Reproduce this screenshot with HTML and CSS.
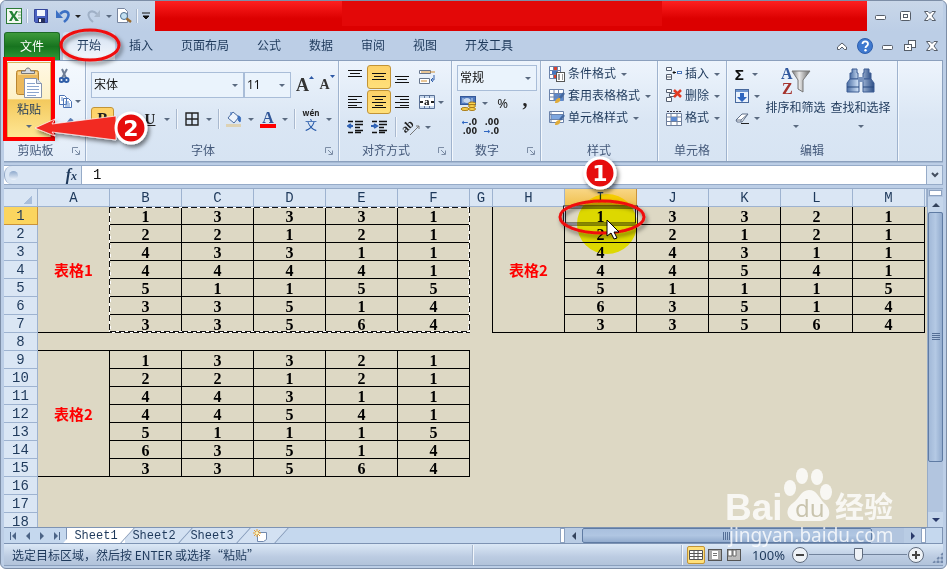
FILE: index.html
```html
<!DOCTYPE html>
<html lang="zh-CN">
<head>
<meta charset="utf-8">
<title>Sheet1</title>
<link rel="stylesheet" href="styles.css">
</head>
<body>
<svg class="defs" aria-hidden="true">
  <defs>
    <linearGradient id="steel" x1="0" y1="0" x2="1" y2="0"><stop offset="0" stop-color="#4a6da3"/><stop offset=".4" stop-color="#c9dcf3"/><stop offset="1" stop-color="#2e4f86"/></linearGradient>
    <linearGradient id="metal" x1="0" y1="0" x2="1" y2="0"><stop offset="0" stop-color="#777"/><stop offset=".4" stop-color="#e8e8e8"/><stop offset="1" stop-color="#666"/></linearGradient>
    <filter id="shade" x="-30%" y="-30%" width="160%" height="180%"><feDropShadow dx="2" dy="3" stdDeviation="2" flood-color="#000" flood-opacity=".5"/></filter>
    <symbol id="launch" viewBox="0 0 8 8"><path d="M.5 6V.5H6M3 3l4 4M7.500 3.500v4h-4" fill="none" stroke="#7c8da5"/></symbol>
    <symbol id="min" viewBox="0 0 12 12"><rect x=".5" y="5.500" width="10" height="4" rx="1" fill="#fff" stroke="#555d68"/></symbol>
    <symbol id="close" viewBox="0 0 12 12"><path d="M.5 1.500h3.500l2 2 2-2h3.500L8 6l3.500 4.500H8l-2-2-2 2H.5L4 6z" fill="#fff" stroke="#555d68"/></symbol>
  </defs>
</svg>
<div class="window">
  <header class="titlebar">
    <div class="quick">
      <svg class="i16" viewBox="0 0 16 16"><rect x=".5" y=".5" width="15" height="15" fill="#f3f8f1" stroke="#2b7a37"/><path d="M3 3h3l2 3.500L10 3h2L9 8l4 5h-3.500L7.500 9.500 5.500 13H3l3-5z" fill="#238335"/><path d="M12 4h3M12 7h3M12 10h3" stroke="#77b77d"/></svg>
      <i class="vsep"></i>
      <button class="q save" aria-label="保存"><svg class="i14" viewBox="0 0 14 14"><path d="M.5.5h13v13h-12l-1-1z" fill="#4b62c0" stroke="#34459a"/><path d="M3 1h8v6H3z" fill="#f4f7fd"/><path d="M4 9h7v5H4z" fill="#27305e"/><path d="M5 10h2v3H5z" fill="#fff"/></svg></button>
      <button class="q undo" aria-label="撤消"><svg class="i14" viewBox="0 0 14 14"><path d="M4 5c5-5 10-2 8 3-1 3-3 4-4 5" fill="none" stroke="#3c70c4" stroke-width="2.500"/><path d="M0 1v8h7z" fill="#3c70c4"/></svg></button>
      <i class="caret dark"></i>
      <button class="q redo" aria-label="恢复"><svg class="i14" viewBox="0 0 14 14"><path d="M10 5C5 0 0 3 2 8c1 3 3 4 4 5" fill="none" stroke="#9fb0c6" stroke-width="2"/><path d="M13 1v7H7z" fill="#a9b8cb"/></svg></button>
      <i class="caret"></i>
      <button class="q view" aria-label="打印预览"><svg class="i16" viewBox="0 0 16 16"><path d="M1.500.5h7l3 3v11h-10z" fill="#fff" stroke="#7886a0"/><circle cx="8" cy="8" r="3.500" fill="#c4e1f2" stroke="#4d6f8f"/><path d="M10.500 10.500L15 14" stroke="#9b6d2f" stroke-width="2.500"/></svg></button>
      <i class="vsep"></i>
      <svg class="i8" viewBox="0 0 8 8"><path d="M0 1h8M1 4h6L4 7z" fill="#111" stroke="#111"/></svg>
    </div>
    <div class="banner"><div class="banner-inner"></div></div>
    <div class="winbtns">
      <button aria-label="最小化"><svg class="i12"><use href="#min"/></svg></button>
      <button aria-label="最大化"><svg class="i12" viewBox="0 0 12 12"><rect x=".5" y="1.500" width="10" height="9" rx="1" fill="#fff" stroke="#555d68"/><rect x="3.500" y="4.500" width="4" height="3" fill="#fff" stroke="#555d68"/></svg></button>
      <button aria-label="关闭"><svg class="i12"><use href="#close"/></svg></button>
    </div>
  </header>

  <nav class="tabs">
    <button class="tab file">文件</button>
    <button class="tab active">开始</button>
    <button class="tab">插入</button>
    <button class="tab">页面布局</button>
    <button class="tab">公式</button>
    <button class="tab">数据</button>
    <button class="tab">审阅</button>
    <button class="tab">视图</button>
    <button class="tab">开发工具</button>
    <div class="docbtns">
      <button aria-label="收起功能区"><svg class="i12" viewBox="0 0 12 12"><path d="M1.500 7L6 3l4.500 4v2.500h-2L6 7 3.500 9.500h-2z" fill="#fff" stroke="#555d68"/></svg></button>
      <button aria-label="帮助"><svg class="i16" viewBox="0 0 16 16"><circle cx="8" cy="8" r="7.500" fill="#3f79cf" stroke="#2e5fae"/><path d="M5.500 6c0-3.500 5.500-3.500 5.500 0 0 2-2.500 2-2.500 4" fill="none" stroke="#fff" stroke-width="1.800"/><circle cx="8.500" cy="12.200" r="1.200" fill="#fff"/></svg></button>
      <button aria-label="最小化窗口"><svg class="i12"><use href="#min"/></svg></button>
      <button aria-label="还原窗口"><svg class="i12" viewBox="0 0 12 12"><rect x="4.500" y=".5" width="7" height="7" fill="#fff" stroke="#555d68"/><rect x=".5" y="4.500" width="7" height="6" fill="#fff" stroke="#555d68"/><path d="M3 7.500h2" stroke="#555d68"/></svg></button>
      <button aria-label="关闭窗口"><svg class="i12"><use href="#close"/></svg></button>
    </div>
  </nav>

  <section class="ribbon">
    <div class="group g-clip">
      <div class="body">
        <button class="paste">
          <svg viewBox="0 0 28 32"><rect x="1.500" y="3.500" width="22" height="24" rx="2" fill="#ecb95c" stroke="#b98530"/><rect x="3" y="5" width="19" height="3" fill="#f7d58f"/><path d="M6.500 6.500V4h4C10 0 16 0 15.500 4h4v2.500z" fill="#d8dce2" stroke="#777"/><path d="M9.500 11.500h12l5 5v14h-17z" fill="#fff" stroke="#8694ad"/><path d="M21.500 11.500v5h5" fill="#dce5f2" stroke="#8694ad"/><path d="M12 16.500h8M12 19.500h12M12 22.500h12M12 25.500h12M12 28.500h9" stroke="#8ba5cf"/></svg>
          <span>粘贴</span><i class="caret"></i>
        </button>
        <div class="stack clipcol">
          <div class="cell"><svg class="i16" viewBox="0 0 16 16"><path d="M3 1l4 9M8 1L3 10" stroke="#6f7f97" stroke-width="2"/><circle cx="2.500" cy="12" r="2" fill="none" stroke="#2f5ea8" stroke-width="2"/><circle cx="7.500" cy="12" r="2" fill="none" stroke="#2f5ea8" stroke-width="2"/></svg></div>
          <div class="cell"><svg class="i16" viewBox="0 0 16 16"><path d="M.5 2.500h5l2 2v7h-7zM4.500 5.500h5l3 3v6h-8z" fill="#fff" stroke="#4c73b4"/><path d="M6 9h4M6 11h5M6 13h5M2 5h2M2 7h2" stroke="#5e8ccc"/></svg><i class="caret"></i></div>
          <div class="cell"><svg class="i16" viewBox="0 0 16 16"><path d="M13 1L8 7" stroke="#5c7db3" stroke-width="4"/><path d="M1 12l6-6 4 4-5 5z" fill="#dcb667" stroke="#8d7948"/></svg></div>
        </div>
      </div>
      <div class="name has-launch"><span>剪贴板</span><svg class="i8"><use href="#launch"/></svg></div>
    </div>

    <div class="group g-font">
      <div class="body stack">
        <div class="line fontsel">
          <div class="pick wide"><select aria-label="字体"><option>宋体</option></select><i class="caret"></i></div>
          <div class="pick size"><select aria-label="字号"><option>11</option></select><i class="caret"></i></div>
          <button class="grow big" aria-label="增大字号">A<svg class="i5" viewBox="0 0 5 5"><path d="M0 4h5L2.500 1z" fill="#2d59a6"/></svg></button>
          <button class="grow small" aria-label="减小字号">A<svg class="i5" viewBox="0 0 5 5"><path d="M0 1h5L2.500 4z" fill="#2d59a6"/></svg></button>
        </div>
        <div class="line fontfmt">
          <button class="tool on b" aria-label="加粗">B</button>
          <button class="tool it" aria-label="倾斜"><svg class="i8" viewBox="0 0 8 8"><path d="M3 0h4M1 8h4M5 0L3 8" stroke="#222" stroke-width="1.500"/></svg></button>
          <button class="tool u" aria-label="下划线">U</button><i class="caret"></i><i class="vsep"></i>
          <button class="tool" aria-label="边框"><svg class="i14" viewBox="0 0 14 14"><path d="M1 1h12v12H1zM7 1v12M1 7h12" fill="none" stroke="#222" stroke-width="1.400"/></svg></button><i class="caret"></i><i class="vsep"></i>
          <button class="tool" aria-label="填充颜色"><svg class="i16" viewBox="0 0 16 16"><path d="M2 7l5-6 6 5-5 6z" fill="#eef4fc" stroke="#4a6ca0"/><path d="M5 4V1M12 5c3 0 3 3 2 6-2-1-2-3-2-6" fill="#3c6fbd" stroke="#3c6fbd"/><path d="M0 13h15v3H0z" fill="#ddd2b4"/></svg></button><i class="caret"></i>
          <button class="tool fc" aria-label="字体颜色">A</button><i class="caret"></i><i class="vsep"></i>
          <button class="tool wen" aria-label="拼音"><span>wén</span><span>文</span></button><i class="caret"></i>
        </div>
      </div>
      <div class="name has-launch"><span>字体</span><svg class="i8"><use href="#launch"/></svg></div>
    </div>

    <div class="group g-align">
      <div class="body aligngrid">
        <button class="tool" aria-label="顶端对齐"><svg class="i16" viewBox="0 0 16 16"><path d="M1 1.500h14M3 4.500h10M1 7.500h14" stroke="#111"/></svg></button>
        <button class="tool on" aria-label="垂直居中"><svg class="i16" viewBox="0 0 16 16"><path d="M1 4.500h14M3 7.500h10M1 10.500h14" stroke="#111"/></svg></button>
        <button class="tool" aria-label="底端对齐"><svg class="i16" viewBox="0 0 16 16"><path d="M1 7.500h14M3 10.500h10M1 13.500h14" stroke="#111"/></svg></button>
        <button class="tool" aria-label="自动换行"><svg class="i16" viewBox="0 0 16 16"><path d="M.5 1.500h11v3H.5zM.5 9.500h10v5H.5z" fill="#fff" stroke="#66758c"/><path d="M2 3h14" stroke="#cf8b2c"/><path d="M2 12h6" stroke="#cf8b2c"/><path d="M15 6v5h-3m2-2l-2 2 2 2" fill="none" stroke="#315fa9"/></svg></button>
        <button class="tool" aria-label="左对齐"><svg class="i16" viewBox="0 0 16 16"><path d="M1 2.500h14M1 5.500h9M1 8.500h14M1 11.500h9M1 13.500h14" stroke="#111"/></svg></button>
        <button class="tool on" aria-label="居中"><svg class="i16" viewBox="0 0 16 16"><path d="M1 2.500h14M4 5.500h8M1 8.500h14M4 11.500h8M1 13.500h14" stroke="#111"/></svg></button>
        <button class="tool" aria-label="右对齐"><svg class="i16" viewBox="0 0 16 16"><path d="M1 2.500h14M6 5.500h9M1 8.500h14M6 11.500h9M1 13.500h14" stroke="#111"/></svg></button>
        <span class="cell"><button class="tool" aria-label="合并后居中"><svg class="i16" viewBox="0 0 16 16"><path d="M.5 1.500h15v13H.5z" fill="#c8d9ee" stroke="#5b7297"/><path d="M5.500 1.500v13M10.500 1.500v13" stroke="#5b7297"/><path d="M1 4h14v8H1z" fill="#fff"/><path d="M1 8h3M12 8h3" stroke="#222" stroke-width="2"/><text class="mg" x="5" y="11">a</text></svg></button><i class="caret"></i></span>
        <button class="tool" aria-label="减少缩进"><svg class="i16" viewBox="0 0 16 16"><path d="M1 2.500h5M8 2.500h8M8 5.500h8M8 8.500h5M8 11.500h8M1 13.500h5M8 13.500h6" stroke="#111" stroke-width="1.400"/><path d="M6 7H2m2-2L1 7l3 2" fill="none" stroke="#2f62b5" stroke-width="2"/></svg></button>
        <button class="tool" aria-label="增加缩进"><svg class="i16" viewBox="0 0 16 16"><path d="M1 2.500h5M8 2.500h8M8 5.500h8M8 8.500h5M8 11.500h8M1 13.500h5M8 13.500h6" stroke="#111" stroke-width="1.400"/><path d="M0 7h4M3 5l3 2-3 2" fill="none" stroke="#2f62b5" stroke-width="2"/></svg></button>
        <span class="cell orient"><i class="vsep"></i><button class="tool" aria-label="方向"><svg class="wide20" viewBox="0 0 20 20"><text x="4" y="15" class="ab" transform="rotate(-45 6 15)">ab</text><path d="M9 18l9-9M18 12V9h-3" fill="none" stroke="#777"/></svg></button><i class="caret"></i></span>
      </div>
      <div class="name has-launch"><span>对齐方式</span><svg class="i8"><use href="#launch"/></svg></div>
    </div>

    <div class="group g-num">
      <div class="body stack">
        <div class="pick"><select aria-label="数字格式"><option>常规</option></select><i class="caret"></i></div>
        <div class="line money">
          <button class="tool" aria-label="会计数字格式"><svg class="i16" viewBox="0 0 16 16"><rect x=".5" y="1.500" width="15" height="8" fill="#4f78bd" stroke="#34589a"/><ellipse cx="7" cy="5.500" rx="3.500" ry="2.500" fill="#c5d7ef"/><path d="M3 3v5M12 3v5" stroke="#c5d7ef"/><ellipse cx="12" cy="8.500" rx="3.500" ry="1.500" fill="#fbd451" stroke="#a87a16"/><ellipse cx="12" cy="11" rx="3.500" ry="1.500" fill="#fbd451" stroke="#a87a16"/><ellipse cx="5" cy="14" rx="4" ry="1.500" fill="#fbd451" stroke="#a87a16"/><ellipse cx="12" cy="14" rx="3.500" ry="1.500" fill="#fbd451" stroke="#a87a16"/></svg></button><i class="caret"></i>
          <button class="tool pct" aria-label="百分比">%</button>
          <button class="tool comma" aria-label="千位分隔">,</button>
        </div>
        <div class="line decs">
          <button class="tool dec" aria-label="增加小数位数"><span><b>←</b>.0</span><span>.00</span></button>
          <button class="tool dec" aria-label="减少小数位数"><span>.00</span><span><b>→</b>.0</span></button>
        </div>
      </div>
      <div class="name has-launch"><span>数字</span><svg class="i8"><use href="#launch"/></svg></div>
    </div>

    <div class="group g-style">
      <div class="body stack list">
        <button class="item"><svg class="i16" viewBox="0 0 16 16"><path d="M.5.5h11v12H.5zM.5 4.500h11M.5 8.500h11M4.500.5v12M8.500.5v12" fill="#fff" stroke="#6b83ab"/><path d="M5 1h3v3H5zM5 9h2v3H5z" fill="#d9412f"/><path d="M3 5h5v3H3z" fill="#4676c0"/><rect x="7.500" y="6.500" width="8" height="9" fill="#fff" stroke="#555"/><path d="M9 9h2M9 11h2M9 13h2M13 9h1M13 11h1M13 13h1" stroke="#333"/></svg>条件格式<i class="caret"></i></button>
        <button class="item"><svg class="i16" viewBox="0 0 16 16"><path d="M.5 1.500h14v11H.5z" fill="#fff" stroke="#6b83ab"/><path d="M5 5h9v8H5z" fill="#5c8ad0"/><path d="M.5 5.500h14M.5 9h14M5 1.500v11M9.500 1.500v11" stroke="#6b83ab"/><path d="M15 5l-4 5" stroke="#44689f" stroke-width="2.500"/><path d="M6 15c0-4 3-5 5-5 1 3-1 5-5 5" fill="#e0ac3a"/></svg>套用表格格式<i class="caret"></i></button>
        <button class="item"><svg class="i16" viewBox="0 0 16 16"><path d="M.5 1.500h14v11H.5z" fill="#fff" stroke="#6b83ab"/><path d="M2 5h11v4H2z" fill="#7ea7e0"/><path d="M2 1.500v11M.5 4.500h14M.5 9.500h14" stroke="#6b83ab"/><path d="M15 5l-4 5" stroke="#44689f" stroke-width="2.500"/><path d="M6 15c0-4 3-5 5-5 1 3-1 5-5 5" fill="#e0ac3a"/></svg>单元格样式<i class="caret"></i></button>
      </div>
      <div class="name"><span>样式</span></div>
    </div>

    <div class="group g-cells">
      <div class="body stack list">
        <button class="item"><svg class="i16" viewBox="0 0 16 16"><path d="M.5 1.500h5v3h-5zM.5 8.500h5v5h-5zM.5 11h5" fill="#fff" stroke="#555f70"/><path d="M10 6.500H7m1.500-1.500L7 6.500 8.500 8" stroke="#111" fill="none"/><rect x="11" y="5" width="5" height="3" fill="#4d77bb"/><path d="M12 6.500h3" stroke="#fff"/></svg>插入<i class="caret"></i></button>
        <button class="item"><svg class="i16" viewBox="0 0 16 16"><path d="M.5 1.500h5v3h-5zM.5 9.500h5v4h-5zM3.500 5.500h6v3h-6z" fill="#fff" stroke="#555f70"/><path d="M8 2l7 7M15 2L8 9" stroke="#e13a22" stroke-width="2.500"/></svg>删除<i class="caret"></i></button>
        <button class="item"><svg class="i16" viewBox="0 0 16 16"><path d="M1 1.500h14" stroke="#334" stroke-dasharray="2 1"/><path d="M.5 3.500h15v12H.5zM.5 7h15M.5 11.500h15M5 3.500v12M11 3.500v12" fill="#fff" stroke="#6e7f9c"/><path d="M5 7h6v4H5z" fill="#5d8ad1"/></svg>格式<i class="caret"></i></button>
      </div>
      <div class="name"><span>单元格</span></div>
    </div>

    <div class="group g-edit">
      <div class="body">
        <div class="stack list">
          <button class="item sigma" aria-label="自动求和"><b>Σ</b><i class="caret"></i></button>
          <button class="item" aria-label="填充"><svg class="i14" viewBox="0 0 14 14"><rect x=".5" y=".5" width="13" height="13" fill="#eaf2fc" stroke="#48699d"/><path d="M1 2h12" stroke="#6d94cf" stroke-width="2"/><path d="M5 4h4v4h3l-5 5-5-5h3z" fill="#2f66c0"/></svg><i class="caret"></i></button>
          <button class="item" aria-label="清除"><svg class="i14" viewBox="0 0 14 14"><path d="M1 9l6-6h6l-6 8H2z" fill="#fff" stroke="#5f6f88"/><path d="M1 9h5l7-6M6 9v2" fill="none" stroke="#5f6f88"/><path d="M6 12.500h8" stroke="#222"/></svg><i class="caret"></i></button>
        </div>
        <button class="large"><svg viewBox="0 0 30 30"><text x="0" y="13" class="az a">A</text><text x="1" y="28" class="az z">Z</text><path d="M11 5h18l-7 9v12l-5-3v-9z" fill="url(#metal)" stroke="#777"/></svg><span>排序和筛选</span><i class="caret"></i></button>
        <button class="large"><svg viewBox="0 0 30 30"><path d="M6 3h5v4h1v6H4V7h2zM18 3h5v4h2v6h-8V7h1z" fill="url(#steel)" stroke="#3d5d93"/><path d="M4 13h9v13H1v-9zM17 13h8l3 4v9H17z" fill="url(#steel)" stroke="#3d5d93"/><path d="M12 11h6v5h-6z" fill="#7893bd"/><path d="M1 21h12M17 21h11" stroke="#26487f"/></svg><span>查找和选择</span><i class="caret"></i></button>
      </div>
      <div class="name"><span>编辑</span></div>
    </div>
    <div class="rest"></div>
  </section>

  <div class="formula">
    <div class="fxbox"><i class="knob"></i><em>f<small>x</small></em></div>
    <input aria-label="编辑栏" value="1">
    <button aria-label="展开编辑栏"><svg class="i8" viewBox="0 0 8 8"><path d="M1 2l3 3 3-3" fill="none" stroke="#444f60" stroke-width="2"/></svg></button>
  </div>

  <main class="sheet">
    <div class="gridbox">
      <table>
        <colgroup><col class="ch"><col span="6" class="cw"><col class="cg"><col span="6" class="cw"><col></colgroup>
        <thead><tr><th class="corner"><i></i></th><th>A</th><th>B</th><th>C</th><th>D</th><th>E</th><th>F</th><th>G</th><th>H</th><th class="hot">I</th><th>J</th><th>K</th><th>L</th><th>M</th><th></th></tr></thead>
        <tbody>
          <tr><th class="hot">1</th><td class="n t" rowspan="7">表格1</td><td class="n">1</td><td class="n">3</td><td class="n">3</td><td class="n">3</td><td class="n">1</td><td class="g" rowspan="7"></td><td class="n t" rowspan="7">表格2</td><td class="n">1</td><td class="n">3</td><td class="n">3</td><td class="n">2</td><td class="n">1</td><td></td></tr>
          <tr><th>2</th><td class="n">2</td><td class="n">2</td><td class="n">1</td><td class="n">2</td><td class="n">1</td><td class="n">2</td><td class="n">2</td><td class="n">1</td><td class="n">2</td><td class="n">1</td><td></td></tr>
          <tr><th>3</th><td class="n">4</td><td class="n">3</td><td class="n">3</td><td class="n">1</td><td class="n">1</td><td class="n">4</td><td class="n">4</td><td class="n">3</td><td class="n">1</td><td class="n">1</td><td></td></tr>
          <tr><th>4</th><td class="n">4</td><td class="n">4</td><td class="n">4</td><td class="n">4</td><td class="n">1</td><td class="n">4</td><td class="n">4</td><td class="n">5</td><td class="n">4</td><td class="n">1</td><td></td></tr>
          <tr><th>5</th><td class="n">5</td><td class="n">1</td><td class="n">1</td><td class="n">5</td><td class="n">5</td><td class="n">5</td><td class="n">1</td><td class="n">1</td><td class="n">1</td><td class="n">5</td><td></td></tr>
          <tr><th>6</th><td class="n">3</td><td class="n">3</td><td class="n">5</td><td class="n">1</td><td class="n">4</td><td class="n">6</td><td class="n">3</td><td class="n">5</td><td class="n">1</td><td class="n">4</td><td></td></tr>
          <tr><th>7</th><td class="n">3</td><td class="n">3</td><td class="n">5</td><td class="n">6</td><td class="n">4</td><td class="n">3</td><td class="n">3</td><td class="n">5</td><td class="n">6</td><td class="n">4</td><td></td></tr>
          <tr><th>8</th><td class="rule" colspan="6"></td><td colspan="8"></td></tr>
          <tr><th>9</th><td class="n t" rowspan="7">表格2</td><td class="n">1</td><td class="n">3</td><td class="n">3</td><td class="n">2</td><td class="n">1</td><td colspan="8"></td></tr>
          <tr><th>10</th><td class="n">2</td><td class="n">2</td><td class="n">1</td><td class="n">2</td><td class="n">1</td><td colspan="8"></td></tr>
          <tr><th>11</th><td class="n">4</td><td class="n">4</td><td class="n">3</td><td class="n">1</td><td class="n">1</td><td colspan="8"></td></tr>
          <tr><th>12</th><td class="n">4</td><td class="n">4</td><td class="n">5</td><td class="n">4</td><td class="n">1</td><td colspan="8"></td></tr>
          <tr><th>13</th><td class="n">5</td><td class="n">1</td><td class="n">1</td><td class="n">1</td><td class="n">5</td><td colspan="8"></td></tr>
          <tr><th>14</th><td class="n">6</td><td class="n">3</td><td class="n">5</td><td class="n">1</td><td class="n">4</td><td colspan="8"></td></tr>
          <tr><th>15</th><td class="n">3</td><td class="n">3</td><td class="n">5</td><td class="n">6</td><td class="n">4</td><td colspan="8"></td></tr>
          <tr><th>16</th><td colspan="14"></td></tr>
          <tr><th>17</th><td colspan="14"></td></tr>
          <tr><th>18</th><td colspan="14"></td></tr>
        </tbody>
      </table>
    </div>
    <div class="vscroll">
      <i class="split"></i>
      <button aria-label="向上滚动"><svg class="i8" viewBox="0 0 8 8"><path d="M0 6h8L4 2z" fill="#34435c"/></svg></button>
      <div class="thumb"><i></i></div>
      <div class="track"></div>
      <button aria-label="向下滚动"><svg class="i8" viewBox="0 0 8 8"><path d="M0 2h8L4 6z" fill="#2a3a6a"/></svg></button>
    </div>
  </main>

  <div class="bottom">
    <div class="sheetnav">
      <button aria-label="第一张"><svg class="i8" viewBox="0 0 8 8"><path d="M1 0h1v8H1zM7 0v8L3 4z" fill="#4c6486"/></svg></button>
      <button aria-label="上一张"><svg class="i8" viewBox="0 0 8 8"><path d="M6 0v8L2 4z" fill="#4c6486"/></svg></button>
      <button aria-label="下一张"><svg class="i8" viewBox="0 0 8 8"><path d="M2 0v8l4-4z" fill="#4c6486"/></svg></button>
      <button aria-label="最后一张"><svg class="i8" viewBox="0 0 8 8"><path d="M1 0v8l4-4zM6 0h1v8H6z" fill="#4c6486"/></svg></button>
    </div>
    <div class="sheettabs">
      <button class="st cur"><span>Sheet1</span></button>
      <button class="st"><span>Sheet2</span></button>
      <button class="st"><span>Sheet3</span></button>
      <button class="st new" aria-label="插入工作表"><span><svg class="i14" viewBox="0 0 14 14"><path d="M4.500 3.500h9v7l-3 2h-6z" fill="#fff" stroke="#7189ad"/><path d="M4 0v8M0 4h8M1 1l6 6M7 1L1 7" stroke="#e9a02c"/><circle cx="4" cy="4" r="1.500" fill="#fff6b8"/></svg></span></button>
    </div>
    <div class="hscroll">
      <i class="hsplit"></i>
      <button aria-label="向左滚动"><svg class="i8" viewBox="0 0 8 8"><path d="M6 0v8L2 4z" fill="#34435c"/></svg></button>
      <div class="hthumb"><i></i></div>
      <div class="htrack"></div>
      <button aria-label="向右滚动"><svg class="i8" viewBox="0 0 8 8"><path d="M2 0v8l4-4z" fill="#2a3a6a"/></svg></button>
      <i class="hsplit"></i>
    </div>
    <div class="end"></div>
  </div>

  <footer class="status">
    <span class="msg">选定目标区域，然后按 ENTER 或选择“粘贴”</span>
    <i class="vsep mid"></i>
    <div class="zoom">
      <i class="vsep"></i>
      <button class="vw on" aria-label="普通"><svg class="i14" viewBox="0 0 14 14"><path d="M.5 2.500h13v9H.5zM.5 5.500h13M.5 8.500h13M5 2.500v9M9 2.500v9" fill="#fff" stroke="#555"/></svg></button>
      <button class="vw" aria-label="页面布局"><svg class="i14" viewBox="0 0 14 14"><rect x=".5" y="1.500" width="13" height="11" fill="#aaa" stroke="#555"/><rect x="4" y="3" width="6" height="8" fill="#fff"/><path d="M5 5.500h4M5 7.500h4" stroke="#777"/></svg></button>
      <button class="vw" aria-label="分页预览"><svg class="i14" viewBox="0 0 14 14"><rect x=".5" y="1.500" width="13" height="11" fill="#bbb" stroke="#555"/><path d="M1 2h4v6H1zM6 2h3v6H6z" fill="#fff" stroke="#666"/></svg></button>
      <span class="pc">100%</span>
      <button class="rnd" aria-label="缩小"><svg class="i16" viewBox="0 0 16 16"><circle cx="8" cy="8" r="7.500" fill="#eef2f7" stroke="#5f6b7d"/><path d="M4 8h8" stroke="#444" stroke-width="2"/></svg></button>
      <input type="range" aria-label="显示比例" min="0" max="100" value="50">
      <button class="rnd" aria-label="放大"><svg class="i16" viewBox="0 0 16 16"><circle cx="8" cy="8" r="7.500" fill="#eef2f7" stroke="#5f6b7d"/><path d="M4 8h8M8 4v8" stroke="#444" stroke-width="2"/></svg></button>
      <i class="grip"></i>
    </div>
  </footer>
</div>

<svg class="marks" width="947" height="569" viewBox="0 0 947 569">
  <rect x="109.500" y="207.500" width="360" height="124" fill="none" stroke="#fff" stroke-width="1"/>
  <path d="M110 207.500h360M110 331.500h360" fill="none" stroke="#111" stroke-dasharray="6 3"/>
  <path d="M109.500 207v125M469.500 207v125" fill="none" stroke="#111" stroke-dasharray="6 3"/>
  <path d="M110.500 209v122M468.500 209v122" fill="none" stroke="#fff" stroke-dasharray="3 6"/>
  <path d="M110 332.500h360" fill="none" stroke="#fff"/>
  <path d="M110 332.500h360" fill="none" stroke="#111" stroke-dasharray="6 3" stroke-dashoffset="4"/>
  <rect x="564.500" y="207" width="72" height="17" fill="none" stroke="#222" stroke-width="3"/>
  <rect x="564.500" y="207" width="72" height="17" fill="none" stroke="#eef" stroke-width="1"/>
  <circle class="glow" cx="607" cy="224" r="30" fill="#ff0"/>
  <g filter="url(#shade)" fill="none" stroke="#f00b0b" stroke-width="3">
    <ellipse cx="90" cy="45" rx="29" ry="15"/>
    <ellipse cx="602" cy="217" rx="42" ry="16"/>
  </g>
  <rect x="5" y="59" width="48" height="80" fill="none" stroke="#f00" stroke-width="4"/>
  <g filter="url(#shade)">
    <path d="M35 128l20-9-3 5 64-8v24l-64-8 3 4z" fill="#f22a22" stroke="#fff" stroke-width=".7"/>
    <circle cx="131" cy="128" r="15" fill="#e60d0d" stroke="#fff" stroke-width="3"/>
    <circle cx="600" cy="173" r="15" fill="#e60d0d" stroke="#fff" stroke-width="3"/>
  </g>
  <text class="num" x="131" y="136">2</text>
  <text class="num" x="600" y="181">1</text>
  <path d="M607 220v16l4-3 3 6 3-1-3-6h5z" fill="#fff" stroke="#000"/>
</svg>

<svg class="mark" width="170" height="84" viewBox="0 0 170 84">
  <g fill="#fff" fill-opacity=".8">
    <text class="bai" x="-4" y="53">Bai</text>
    <ellipse cx="61" cy="21" rx="6" ry="8"/><ellipse cx="73" cy="9" rx="6" ry="8"/><ellipse cx="88" cy="10" rx="6" ry="8"/><ellipse cx="97" cy="25" rx="6" ry="8"/>
    <path d="M80 23c8 0 10 8 15 13 7 5 8 17-3 18H68c-12-1-12-13-4-18 6-4 8-13 16-13z"/>
    <text class="jy" x="106" y="51">经验</text>
    <text class="url" x="0" y="75">jingyan.baidu.com</text>
  </g>
  <text class="du" x="66" y="50">du</text>
</svg>
</body>
</html>
```
FILE: styles.css
```css
* { box-sizing: border-box; }
body { margin: 0; position: relative; background: #fff; font: 12px/16px "Noto Sans", "Noto Sans CJK SC", sans-serif; color: #1e395b; }
button { font: inherit; color: inherit; background: none; border: 0; padding: 0; margin: 0; display: flex; align-items: center; justify-content: center; }
svg { display: block; flex: none; }
.defs { position: absolute; width: 0; height: 0; }
.i16 { width: 16px; height: 16px; }
.i14 { width: 14px; height: 14px; }
.i12 { width: 12px; height: 12px; }
.i8 { width: 8px; height: 8px; }
.i5 { width: 5px; height: 5px; }
.wide20 { width: 20px; height: 20px; }
.caret { flex: none; width: 0; height: 0; border: 3px solid transparent; border-top-color: #5a6a80; border-bottom: 0; }
.caret.dark { border-top-color: #222; }
.vsep { flex: none; width: 2px; height: 20px; background: #a9b9cf; border-right: 1px solid #f2f6fb; }
.stack { display: flex; flex-direction: column; }
.line, .cell { display: flex; align-items: center; }

.window { height: 100vh; display: flex; flex-direction: column; padding: 0 3px 2px; border: 1px solid #7d8ea7; border-radius: 6px; background: #bccee6; overflow: hidden; }

.titlebar { display: flex; height: 30px; flex: none; background: linear-gradient(#c9d7e9, #bccee6); }
.quick { width: 151px; display: flex; align-items: center; gap: 4px; padding: 0 2px; }
.quick .vsep { height: 14px; }
.q.save { width: 18px; }
.q.undo, .q.redo { width: 17px; }
.banner { flex: 1; height: 31px; margin-top: -1px; background: linear-gradient(#ff2222, #dc0000 60%); display: flex; justify-content: center; padding-right: 18px; }
.banner-inner { width: 46%; height: 26px; background: #e30808; }
.winbtns { width: 76px; display: flex; align-items: center; justify-content: space-between; padding: 0 7px 0 8px; }

.tabs { display: flex; height: 29px; flex: none; padding-top: 1px; align-items: stretch; }
.tab { padding: 0 14px; }
.tab.file { width: 56px; margin-right: 3px; padding: 0; color: #fff; background: linear-gradient(#3d9a3b, #17741f 50%, #2f9a36); border: 1px solid #1c6a25; border-bottom: 0; border-radius: 3px 3px 0 0; }
.tab.active { background: linear-gradient(#d3e0f1, #f4f8fd); border-radius: 3px 3px 0 0; }
.docbtns { margin-left: auto; display: flex; align-items: center; gap: 10px; padding-right: 5px; }
.docbtns button:nth-child(2) { margin: 0 -1px; }

.ribbon { display: flex; flex: none; height: 102px; border: 1px solid #8ba0bd; border-left: 0; background: linear-gradient(#edf4fc, #dae6f4 60%, #d7e4f3); box-shadow: 0 1px #a5b9d3; }
.group { display: flex; flex-direction: column; border-right: 1px solid #9fb3ce; box-shadow: 1px 0 #f3f8fd; }
.group .body { flex: 1; }
.name { display: grid; grid-template-columns: 1fr; height: 21px; align-items: center; text-align: center; color: #44597a; }
.name.has-launch { grid-template-columns: 1fr 18px; }
.name svg { margin-left: 5px; }
.rest { flex: 1; }

.g-clip { width: 82px; background: linear-gradient(#f4f9fe, #e2ecf8); }
.g-clip .body { display: flex; }
.paste { width: 44px; margin: 1px 0 1px 3px; flex-direction: column; justify-content: flex-start; gap: 3px; padding-top: 4px; border: 1px solid #d9b456; background: linear-gradient(#fff8e3, #fdf1c8 48%, #f3c95d 49%, #ffe795); }
.paste svg { width: 28px; height: 32px; }
.paste .caret { margin-top: 4px; }
.clipcol { flex: 1; padding: 7px 0 0 8px; gap: 9px; }
.clipcol .cell { gap: 0; }

.g-font { width: 253px; }
.g-font .body { padding: 11px 0 0 5px; gap: 9px; }
.pick { display: grid; align-items: center; height: 26px; border: 1px solid #a9bdd8; background: #eaf3fc; }
.pick > * { grid-area: 1 / 1; }
.pick .caret { justify-self: end; margin-right: 5px; }
.pick select { appearance: none; border: 0; background: none; width: 100%; height: 100%; font: inherit; color: #111; padding: 0 2px; }
.pick.wide { width: 153px; }
.pick.size { width: 47px; margin-right: 3px; }
.grow { width: 22px; align-items: flex-start; font: bold 18px/20px "Liberation Serif", serif; color: #333; }
.grow.small { font-size: 14px; line-height: 22px; }
.fontfmt { gap: 6px; }
.tool { min-width: 16px; height: 24px; color: #222; }
.tool.on { border: 1px solid #c29436; border-radius: 3px; background: linear-gradient(#fdd167, #ffe07a); }
.tool.b { width: 23px; font: bold 16px "Liberation Serif", serif; }
.tool.u { font: bold 15px "Liberation Serif", serif; text-decoration: underline; }
.tool.fc { height: 18px; font: bold 16px/15px "Liberation Serif", serif; color: #2f5597; border-bottom: 4px solid #f00; }
.tool.wen { flex-direction: column; width: 18px; }
.wen span { font: bold 8px/10px "Noto Sans", sans-serif; }
.wen span + span { font: 12px/13px "Noto Sans CJK SC", sans-serif; color: #2357a8; }

.g-align { width: 113px; }
.aligngrid { display: grid; grid-template-columns: 24px 24px 22px 1fr; grid-auto-rows: 24px; gap: 1px 0; padding: 4px 0 0 4px; }
.aligngrid > .tool:nth-child(4) { justify-self: start; margin-left: 6px; }
.aligngrid .cell { gap: 3px; margin-left: 6px; }
.aligngrid .orient { grid-column: span 2; margin-left: 4px; gap: 4px; }
.mg { font: bold 11px "Liberation Serif", serif; fill: #111; }
.ab { font: bold 12px "Liberation Serif", serif; fill: #222; }

.g-num { width: 89px; }
.g-num .body { padding: 4px 3px 0 5px; }
.money { justify-content: space-between; padding: 0 4px 0 3px; }
.money .pct { font-size: 13px; }
.money .comma { font: bold 20px/12px "Liberation Serif", serif; align-items: flex-start; height: 20px; }
.decs { gap: 6px; padding-left: 4px; }
.tool.dec { flex-direction: column; align-items: flex-end; font: bold 8px/9px "DejaVu Sans", sans-serif; }
.dec b { color: #2f66c0; }

.g-style { width: 117px; }
.g-cells { width: 69px; }
.list { padding: 2px 0 0 8px; }
.item { height: 22px; justify-content: flex-start; gap: 3px; }
.item .caret { margin-left: 2px; }
.g-edit { width: 171px; }
.g-edit .body { display: flex; }
.g-edit .list { width: 36px; }
.item.sigma { font-size: 15px; color: #111; width: 100%; gap: 6px; }
.large { width: 65px; flex-direction: column; justify-content: flex-start; padding-top: 5px; gap: 4px; white-space: nowrap; }
.large svg { width: 30px; height: 30px; }
.large .caret { margin-top: 5px; }
.az { font: bold 16px "Liberation Serif", serif; }
.az.a { fill: #31589d; }
.az.z { fill: #a5322c; }

.formula { display: flex; height: 20px; flex: none; margin: 3px 0; border: 1px solid #96abc8; border-width: 1px 0; background: #fff; }
.fxbox { width: 78px; display: flex; align-items: center; justify-content: space-between; padding: 0 4px; background: #dae6f4; border-right: 1px solid #96abc8; border-left: 1px solid #96abc8; border-radius: 8px 0 0 8px; }
.knob { width: 9px; height: 9px; border-radius: 50%; background: linear-gradient(#8ea9cc, #eef4fb); }
.fxbox em { font: italic bold 16px/16px "Liberation Serif", serif; }
.fxbox small { font-size: 12px; }
.formula input { flex: 1; min-width: 0; border: 0; padding: 0 11px; background: none; font: 14px "Liberation Mono", monospace; color: #111; }
.formula button { width: 17px; background: #dae6f4; border: 1px solid #96abc8; border-width: 0 1px; }

.sheet { flex: 1; min-height: 0; display: flex; }
.gridbox { flex: 1; min-width: 0; overflow: hidden; background: #ddd8c4; border-top: 1px solid #96abc8; }
table { width: 100%; table-layout: fixed; border-collapse: separate; border-spacing: 0; }
.ch { width: 34px; }
.cw { width: 72px; }
.cg { width: 23px; }
tr { height: 18px; }
th, td { height: 18px; padding: 0; overflow: hidden; text-align: center; vertical-align: middle; }
th { padding-top: 2px; font: 14px/15px "Liberation Mono", monospace; background: #dae6f4; border: 1px solid #9eb3d0; border-width: 0 1px 1px 0; color: #1e395b; }
th.hot { background: #fbd55f; border-color: #c9923a; }
thead th.hot { background: linear-gradient(#f8d684, #f0c04e); }
.corner i { display: block; width: 9px; height: 9px; margin: 2px 5px 0 auto; background: linear-gradient(135deg, transparent 50%, #a9bedb 50%); }
td { padding-top: 2px; font: bold 16px/15px "Liberation Serif", serif; color: #000; }
td.n { border: 1px solid #000; border-width: 0 1px 1px 0; }
td.t { padding: 0; font: bold 15px/18px "Noto Sans CJK SC", sans-serif; color: #f00; }
td.g { border-right: 1px solid #000; }
td.rule { border-bottom: 1px solid #000; }

.vscroll { width: 16px; display: flex; flex-direction: column; background: #b2c5df; border: 1px solid #96abc8; border-width: 1px 0 0 1px; }
.vscroll button { height: 15px; flex: none; background: #c5d6eb; }
.split { height: 6px; margin: 1px; border: 1px solid #8da2c0; background: #fff; }
.thumb { flex: 5 1 0; display: flex; align-items: center; justify-content: center; border: 1px solid #5f7ba3; border-radius: 2px; background: linear-gradient(90deg, #a2b9d8, #b4c9e4 50%, #93acce); }
.thumb i { width: 8px; height: 8px; background: repeating-linear-gradient(#556f96 0 1px, transparent 1px 2px); }
.track { flex: 1 1 0; }

.bottom { display: flex; flex: none; height: 17px; border: 1px solid #7d93b3; border-left: 0; background: #c5d8ee; }
.sheetnav { display: flex; width: 63px; align-items: center; justify-content: space-around; padding: 0 2px; background: #c5d8ee; border-right: 1px solid #7d93b3; }
.sheettabs { display: flex; flex: 1; font: 12px/14px "Liberation Mono", monospace; }
.st { position: relative; width: 58px; }
.st::before { content: ""; position: absolute; inset: 0 -3px 0 3px; background: #d3e1f2; border-right: 1px solid #7d93b3; transform: skewX(-42deg); }
.st span { position: relative; }
.st:nth-child(1) { z-index: 4; }
.st:nth-child(2) { z-index: 3; }
.st:nth-child(3) { z-index: 2; }
.st.new { width: 38px; }
.cur, .cur::before { background: #fff; }
.hscroll { display: flex; width: 39%; }
.hscroll button { width: 17px; background: #b9cce4; }
.hsplit { flex: none; width: 5px; border: 1px solid #8da2c0; background: #fff; }
.hthumb { flex: 9 1 0; display: flex; align-items: center; justify-content: center; border: 1px solid #5f7ba3; border-radius: 2px; background: linear-gradient(#a9c0de, #b0c6e2 50%, #93acce); }
.hthumb i { width: 8px; height: 8px; background: repeating-linear-gradient(90deg, #556f96 0 1px, transparent 1px 2px); }
.htrack { flex: 1 1 0; background: #b2c5df; }
.end { width: 16px; }

.status { display: flex; align-items: center; flex: none; height: 22px; padding-left: 8px; background: linear-gradient(#dbe8f6, #bccce2 60%, #b2c3da); border-bottom: 1px solid #8ba0bd; }
.msg { width: 460px; font-family: "Noto Sans CJK SC", sans-serif; }
.zoom { margin-left: auto; display: flex; align-items: center; gap: 1px; }
.zoom .vsep { margin-right: 3px; }
.vw { width: 18px; height: 18px; }
.vw.on { border: 1px solid #c29436; border-radius: 2px; background: #ffe07a; }
.pc { margin: 0 6px 0 8px; font-size: 13px; }
.zoom input { appearance: none; width: 98px; height: 18px; margin: 0; background: linear-gradient(#72839c, #72839c) center / 100% 1px no-repeat; }
.zoom input::-webkit-slider-thumb { appearance: none; width: 9px; height: 13px; background: #eef2f7; border: 1px solid #5f6b7d; border-radius: 1px 1px 5px 5px; }
.grip { width: 11px; height: 11px; margin: 6px 0 0 7px; background: radial-gradient(#7389ab 1px, transparent 2px) 0 0 / 4px 4px; clip-path: polygon(100% 0, 100% 100%, 0 100%); }

.marks { position: absolute; left: 0; top: 0; pointer-events: none; }
.marks, .mark { overflow: visible; }
.glow { mix-blend-mode: multiply; }
.num { font: bold 22px "DejaVu Sans", sans-serif; fill: #fff; text-anchor: middle; }
.mark { position: absolute; right: 48px; bottom: 18px; pointer-events: none; }
.bai { font: bold 37px "Liberation Sans", sans-serif; }
.jy { font: bold 29px "Noto Sans CJK SC", sans-serif; }
.url { font: 19px "Noto Sans", sans-serif; }
.du { font: 24px "Noto Sans", sans-serif; fill: #c9c4ae; }
```
